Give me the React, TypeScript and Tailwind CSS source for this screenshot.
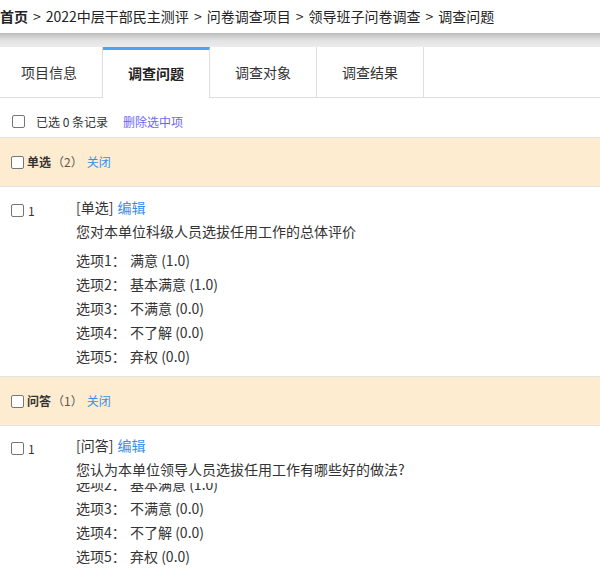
import React from "react";

const font = { fontFamily: '"Noto Sans CJK SC", "Noto Sans", sans-serif' };

function Box() {
  return <span className="inline-block w-[13px] h-[13px] border border-[#767676] rounded-[2px] bg-white shrink-0" />;
}

const options = [
  ["选项1：", "满意 (1.0)"],
  ["选项2：", "基本满意 (1.0)"],
  ["选项3：", "不满意 (0.0)"],
  ["选项4：", "不了解 (0.0)"],
  ["选项5：", "弃权 (0.0)"],
];

function Opt({ o }: { o: string[] }) {
  return (
    <div className="flex h-6 leading-6 text-[14px] text-[#333]">
      <span className="w-[54px]">{o[0]}</span>
      <span>{o[1]}</span>
    </div>
  );
}

function GroupHeader({ name, count }: { name: string; count: number }) {
  return (
    <div className="h-[50px] border-y border-[#e3e3e3] bg-[#feecd0] flex items-center pl-[11px] text-[12px] text-[#333]">
      <Box />
      <span className="ml-[3px] font-bold">{name}</span>
      <span className="ml-[1px] text-[#555]">（{count}）</span>
      <span className="ml-[4px] text-[#3a8ee6]">关闭</span>
    </div>
  );
}

function QLeft() {
  return (
    <div className="w-[76px] shrink-0 flex items-start pl-[11px]">
      <span className="mt-[9px] flex">
        <Box />
      </span>
      <span className="ml-[4px] mt-[8px] text-[12px] text-[#333] leading-4">1</span>
    </div>
  );
}

export default function App() {
  return (
    <div style={font} className="w-[600px] h-[571px] overflow-hidden bg-white text-[#333]">
      <div className="h-[33px] flex items-center pb-[1px] text-[14px] text-[#222] whitespace-nowrap">
        <span className="font-bold">首页</span>
        <span className="mx-[5px]">&gt;</span>
        <span>2022中层干部民主测评</span>
        <span className="mx-[5px]">&gt;</span>
        <span>问卷调查项目</span>
        <span className="mx-[5px]">&gt;</span>
        <span>领导班子问卷调查</span>
        <span className="mx-[5px]">&gt;</span>
        <span>调查问题</span>
      </div>
      <div className="h-[14px] bg-linear-to-b from-[#bcbcbc] via-[#e2e2e2] to-[#ececec]" />
      <div className="h-[51px] flex border-b border-[#dedede] -ml-[4px]">
        <div className="w-[107px] border-r border-[#dedede] flex items-center justify-center text-[14px] text-[#333]">项目信息</div>
        <div className="w-[107px] border-r border-t-[3px] border-t-[#4ea3f1] border-r-[#dedede] bg-white -mb-px flex items-center justify-center text-[14px] text-[#222] font-semibold pb-[2px]">调查问题</div>
        <div className="w-[107px] border-r border-[#dedede] flex items-center justify-center text-[14px] text-[#333]">调查对象</div>
        <div className="w-[107px] border-r border-[#dedede] flex items-center justify-center text-[14px] text-[#333]">调查结果</div>
      </div>
      <div className="h-[39px] flex items-center pl-[12px] pt-[8px] text-[12px]">
        <Box />
        <span className="ml-[11px] text-[#333]">已选 0 条记录</span>
        <span className="ml-[15px] text-[#6d67ee]">删除选中项</span>
      </div>
      <GroupHeader name="单选" count={2} />
      <div className="flex pt-[8px] pb-[8px]">
        <QLeft />
        <div>
          <div className="h-6 leading-6 text-[14px]">
            <span className="text-[#333]">[单选]</span>
            <span className="ml-[4px] text-[#3a8ee6]">编辑</span>
          </div>
          <div className="h-6 leading-6 text-[14px] text-[#333]">您对本单位科级人员选拔任用工作的总体评价</div>
          <div className="mt-[5px]">
            {options.map((o) => (
              <Opt key={o[0]} o={o} />
            ))}
          </div>
        </div>
      </div>
      <GroupHeader name="问答" count={1} />
      <div className="flex pt-[7px]">
        <QLeft />
        <div>
          <div className="h-6 leading-6 text-[14px]">
            <span className="text-[#333]">[问答]</span>
            <span className="ml-[4px] text-[#3a8ee6]">编辑</span>
          </div>
          <div className="h-6 leading-6 text-[14px] text-[#333]">您认为本单位领导人员选拔任用工作有哪些好的做法?</div>
          <div className="mt-[2px] h-[13px] overflow-hidden">
            <div className="-mt-[11px]">
              <Opt o={options[1]} />
            </div>
          </div>
          {options.slice(2).map((o) => (
            <Opt key={o[0]} o={o} />
          ))}
        </div>
      </div>
    </div>
  );
}
